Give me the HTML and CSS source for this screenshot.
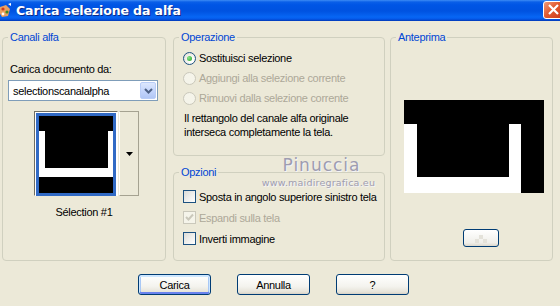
FILE: index.html
```html
<!DOCTYPE html>
<html lang="it">
<head>
    <meta charset="UTF-8">
    <title>Carica selezione da alfa</title>
    <link rel="stylesheet" href="styles.css">
</head>
<body>
<div class="window">
    <div class="titlebar">
        <svg class="app-icon" width="13" height="16" viewBox="0 0 13 16">
            <path d="M1 4 L7 2 L11 6 L9 13 L3 14 L0 9 Z" fill="#e8a060"/>
            <circle cx="4" cy="6" r="1.6" fill="#d23a1a"/>
            <circle cx="8" cy="9" r="1.6" fill="#3a8a2a"/>
            <circle cx="4" cy="11" r="1.4" fill="#fff"/>
            <path d="M9 1 L12 0 L12 3 Z" fill="#fff"/>
        </svg>
        <span class="title">Carica selezione da alfa</span>
        <span class="close-btn">
            <svg width="21" height="18" viewBox="0 0 21 18">
                <path d="M6 4 L15 13 M15 4 L6 13" stroke="#fff" stroke-width="2.2"/>
            </svg>
        </span>
    </div>

    <div class="dialog-body">
        <div class="panels">
            <!-- Canali alfa -->
            <fieldset class="group group-channels">
                <legend>Canali alfa</legend>
                <div class="channels-inner">
                    <div class="field-label">Carica documento da:</div>
                    <div class="combo">
                        <span class="combo-text">selectionscanalalpha</span>
                        <span class="combo-btn">
                            <svg width="9" height="6" viewBox="0 0 9 6">
                                <path d="M1 1 L4.5 4.5 L8 1" fill="none" stroke="#4d6185" stroke-width="2"/>
                            </svg>
                        </span>
                    </div>
                    <div class="thumb-row">
                        <div class="thumb-frame">
                            <div class="thumb">
                                <svg width="74" height="77" viewBox="0 0 74 77">
                                    <rect width="74" height="77" fill="#000"/>
                                    <rect x="0" y="15" width="6" height="46" fill="#fff"/>
                                    <rect x="69" y="15" width="5" height="46" fill="#fff"/>
                                    <rect x="0" y="52" width="74" height="9" fill="#fff"/>
                                </svg>
                            </div>
                        </div>
                        <div class="thumb-drop">
                            <svg width="7" height="4" viewBox="0 0 7 4"><path d="M0 0 H7 L3.5 4 Z" fill="#000"/></svg>
                        </div>
                    </div>
                    <div class="thumb-caption">Sélection #1</div>
                </div>
            </fieldset>

            <div class="col-middle">
                <!-- Operazione -->
                <fieldset class="group group-operation">
                    <legend>Operazione</legend>
                    <div class="operation-inner">
                        <div class="option-row"><span class="radio checked"></span>Sostituisci selezione</div>
                        <div class="option-row disabled"><span class="radio"></span>Aggiungi alla selezione corrente</div>
                        <div class="option-row disabled"><span class="radio"></span>Rimuovi dalla selezione corrente</div>
                        <p class="note">Il rettangolo del canale alfa originale<br>interseca completamente la tela.</p>
                    </div>
                </fieldset>

                <!-- Opzioni -->
                <fieldset class="group group-options">
                    <legend>Opzioni</legend>
                    <div class="options-inner">
                        <div class="check-row"><span class="checkbox"></span>Sposta in angolo superiore sinistro tela</div>
                        <div class="check-row disabled">
                            <span class="checkbox">
                                <svg width="11" height="11" viewBox="0 0 11 11"><path d="M2 5 L4.5 7.5 L9 2.5" fill="none" stroke="#cac8bb" stroke-width="2"/></svg>
                            </span>Espandi sulla tela
                        </div>
                        <div class="check-row"><span class="checkbox"></span>Inverti immagine</div>
                    </div>
                </fieldset>
            </div>

            <!-- Anteprima -->
            <fieldset class="group group-preview">
                <legend>Anteprima</legend>
                <div class="preview-inner">
                    <svg class="preview-img" width="140" height="93" viewBox="0 0 140 93">
                        <rect width="140" height="93" fill="#000"/>
                        <rect x="0" y="24" width="13" height="69" fill="#fff"/>
                        <rect x="105" y="24" width="12" height="53" fill="#fff"/>
                        <rect x="0" y="77" width="117" height="16" fill="#fff"/>
                    </svg>
                    <span class="zoom-btn"><span class="zoom-pattern"></span></span>
                </div>
            </fieldset>
        </div>

        <div class="actions">
            <button class="xp-button default">Carica</button>
            <button class="xp-button">Annulla</button>
            <button class="xp-button">?</button>
        </div>
    </div>

    <div class="watermark">
        <div class="wm-name">Pinuccia</div>
        <div class="wm-url">www.maidiregrafica.eu</div>
    </div>
</div>
</body>
</html>
```

FILE: styles.css
```css
* {
    box-sizing: border-box;
}

body {
    margin: 0;
    background: #ece9d8;
}

.window {
    position: relative;
    width: 560px;
    height: 306px;
    overflow: hidden;
    background: #ece9d8;
    font-family: "Liberation Sans", Arial, sans-serif;
    font-size: 11px;
    letter-spacing: -0.3px;
    color: #000;
}

/* Title bar */
.titlebar {
    position: relative;
    height: 21px;
    display: flex;
    align-items: center;
    background: linear-gradient(#3d8cf5 0, #0a5fe8 2px, #0055e5 5px, #0052e0 11px, #0766f4 17px, #0559ea 19px, #0037b5 21px);
}

.app-icon {
    margin-left: -1px;
    margin-right: 4px;
}

.title {
    color: #fff;
    font-family: "DejaVu Sans", sans-serif;
    font-weight: bold;
    font-size: 12.5px;
    letter-spacing: -0.1px;
    text-shadow: 1px 1px 0 #0a2a8a;
}

.close-btn {
    position: absolute;
    right: -4px;
    top: 1px;
    width: 21px;
    height: 18px;
    border: 1px solid #fff;
    border-radius: 3px;
    background: linear-gradient(135deg, #f09a7a, #e25a30 45%, #c8391a);
    line-height: 0;
}

.close-btn svg {
    margin: -1px 0 0 -1px;
}

/* Layout */
.dialog-body {
    padding: 10px 0 0 2px;
}

.panels {
    display: flex;
    height: 230px;
}

.group {
    margin: 0;
    padding: 0;
    border: 1px solid #d0d0bf;
    border-radius: 4px;
    min-width: 0;
}

.group legend {
    margin-left: 5px;
    padding: 0 2px;
    line-height: 13px;
    color: #0046d5;
}

.group-channels {
    width: 164px;
}

.col-middle {
    width: 212px;
    margin-left: 7px;
    display: flex;
    flex-direction: column;
}

.group-operation {
    height: 125px;
}

.group-options {
    flex: 1;
    margin-top: 10px;
}

.group-preview {
    width: 163px;
    margin-left: 5px;
}

/* Canali alfa */
.channels-inner {
    padding: 19px 0 0 5px;
}

.field-label {
    line-height: 13px;
    margin-left: 2px;
}

.combo {
    margin-top: 4px;
    width: 150px;
    height: 21px;
    border: 1px solid #7f9db9;
    background: #fff;
    display: flex;
    align-items: center;
}

.combo-text {
    flex: 1;
    padding-left: 4px;
}

.combo-btn {
    width: 16px;
    height: 17px;
    margin-right: 1px;
    border: 1px solid #b9cdf7;
    border-radius: 2px;
    background: linear-gradient(#dce7fd, #c1d3fb 60%, #b1c7f5);
    display: flex;
    align-items: center;
    justify-content: center;
}

.thumb-row {
    display: flex;
    margin: 10px 0 0 26px;
    height: 85px;
}

.thumb-frame {
    width: 84px;
    border-top: 1px solid #6f6d62;
    border-left: 1px solid #6f6d62;
    border-right: 1px solid #fff;
    border-bottom: 1px solid #fff;
    background: #fff;
    padding: 1px 1px 0 1px;
}

.thumb {
    border: 3px solid #316ac5;
    line-height: 0;
}

.thumb-drop {
    width: 20px;
    margin-left: 1px;
    border: 1px solid #a5a291;
    border-left-color: #fff;
    background: #ece9d8;
    display: flex;
    align-items: center;
    justify-content: center;
}

.thumb-caption {
    margin-top: 9px;
    text-align: center;
    line-height: 14px;
    padding-right: 5px;
}

/* Operazione */
.operation-inner {
    padding: 4px 0 0 9px;
}

.option-row,
.check-row {
    display: flex;
    align-items: center;
    height: 20px;
}

.check-row {
    height: 21px;
}

.option-row.disabled,
.check-row.disabled {
    color: #aca899;
}

.radio {
    width: 13px;
    height: 13px;
    margin-right: 3px;
    border: 1px solid #1c5180;
    border-radius: 50%;
    background: radial-gradient(circle at 65% 65%, #fff 20%, #dcd9cd);
    display: flex;
    align-items: center;
    justify-content: center;
}

.radio.checked::after {
    content: "";
    width: 5px;
    height: 5px;
    border-radius: 50%;
    background: radial-gradient(circle at 35% 35%, #8ae58a, #21a121);
}

.disabled .radio {
    border-color: #cac8bb;
    background: #f5f4ea;
}

.note {
    margin: 3px 0 0 1px;
    line-height: 14px;
}

/* Opzioni */
.options-inner {
    padding: 7px 0 0 9px;
}

.checkbox {
    width: 13px;
    height: 13px;
    margin-right: 3px;
    border: 1px solid #1c5180;
    background: linear-gradient(135deg, #dcdcd7, #fff);
    line-height: 0;
}

.disabled .checkbox {
    border-color: #cac8bb;
    background: #f5f4ea;
}

/* Anteprima */
.preview-inner {
    padding: 56px 0 0 13px;
}

.preview-img {
    display: block;
}

.zoom-btn {
    display: block;
    margin: 36px 0 0 59px;
    width: 36px;
    height: 18px;
    border: 1px solid #003c74;
    border-radius: 3px;
    background: linear-gradient(#fff, #f0efea 80%, #dcd8cc);
    position: relative;
}

.zoom-pattern {
    position: absolute;
    left: 11px;
    top: 5px;
    width: 12px;
    height: 8px;
    background:
        linear-gradient(90deg, #e4e2da 4px, transparent 4px, transparent 8px, #e4e2da 8px) 0 4px / 12px 4px no-repeat,
        linear-gradient(90deg, transparent 4px, #e4e2da 4px, #e4e2da 8px, transparent 8px) 0 0 / 12px 4px no-repeat;
}

/* Bottom buttons */
.actions {
    display: flex;
    gap: 26px;
    padding: 13px 0 0 136px;
}

.xp-button {
    width: 73px;
    height: 21px;
    padding: 0;
    border: 1px solid #003c74;
    border-radius: 3px;
    background: linear-gradient(#fff, #f4f3ee 60%, #e6e3d8 90%, #d6d0c5);
    font-family: "Liberation Sans", Arial, sans-serif;
    font-size: 11px;
    letter-spacing: -0.3px;
    color: #000;
}

.xp-button.default {
    box-shadow: inset 0 1px 0 1px #cee7ff, inset 0 -1px 0 1px #6982ee, inset 1px 0 0 1px #a9c8f5, inset -1px 0 0 1px #a9c8f5;
}

/* Watermark over the dialog */
.watermark {
    position: absolute;
    left: 256px;
    top: 156px;
    width: 125px;
    text-align: center;
    color: #9e9db0;
    font-family: "DejaVu Sans", sans-serif;
    text-shadow: 1px 1px 0 #f4f4f8;
    pointer-events: none;
}

.wm-name {
    font-size: 17px;
    letter-spacing: 1px;
    line-height: 19px;
    padding-left: 6px;
}

.wm-url {
    font-size: 9.5px;
    letter-spacing: 0.2px;
    line-height: 12px;
    margin-top: 2px;
}
```
